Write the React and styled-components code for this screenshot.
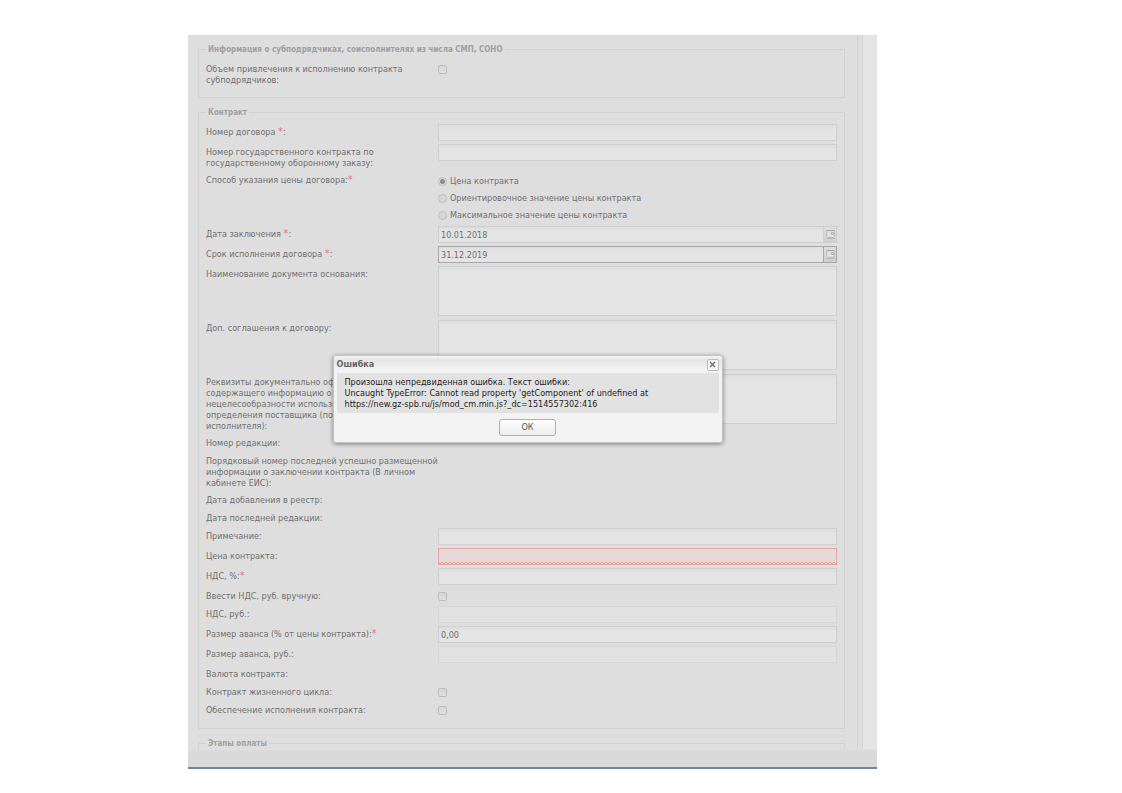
import React, {useState} from 'react'
import styled, {createGlobalStyle} from 'styled-components'

const groups = [
    {
        title: 'Информация о субподрядчиках, соисполнителях из числа СМП, СОНО',
        fields: [
            {id: 'subcontract', label: 'Объем привлечения к исполнению контракта\nсубподрядчиков', type: 'check'},
        ],
    },
    {
        title: 'Контракт',
        fields: [
            {id: 'number', label: 'Номер договора ', star: 'before'},
            {id: 'stateNumber', label: 'Номер государственного контракта по\nгосударственному оборонному заказу'},
            {id: 'priceType', label: 'Способ указания цены договора', star: 'after', type: 'radio'},
            {id: 'signed', label: 'Дата заключения ', star: 'before', type: 'date', value: '10.01.2018'},
            {id: 'due', label: 'Срок исполнения договора ', star: 'before', type: 'date', value: '31.12.2019', active: true},
            {id: 'basis', label: 'Наименование документа основания', type: 'area'},
            {id: 'extra', label: 'Доп. соглашения к договору', type: 'area'},
            {
                id: 'report',
                label: 'Реквизиты документально оформленного отчета,\nсодержащего информацию о невозможности\nнецелесообразности использования способов\nопределения поставщика (подрядчика,\nисполнителя)',
                type: 'area',
            },
            {id: 'revision', label: 'Номер редакции', type: 'display'},
            {id: 'order', label: 'Порядковый номер последней успешно размещенной\nинформации о заключении контракта (В личном\nкабинете ЕИС)', type: 'display'},
            {id: 'added', label: 'Дата добавления в реестр', type: 'display'},
            {id: 'changed', label: 'Дата последней редакции', type: 'display'},
            {id: 'note', label: 'Примечание'},
            {id: 'price', label: 'Цена контракта', invalid: true},
            {id: 'vat', label: 'НДС, %', star: 'after'},
            {id: 'vatManual', label: 'Ввести НДС, руб. вручную', type: 'check'},
            {id: 'vatSum', label: 'НДС, руб.', disabled: true},
            {id: 'advance', label: 'Размер аванса (% от цены контракта)', star: 'after', value: '0,00'},
            {id: 'advanceSum', label: 'Размер аванса, руб.', disabled: true},
            {id: 'currency', label: 'Валюта контракта', type: 'display'},
            {id: 'lifeCycle', label: 'Контракт жизненного цикла', type: 'check'},
            {id: 'security', label: 'Обеспечение исполнения контракта', type: 'check'},
        ],
    },
    {title: 'Этапы оплаты', fields: []},
]

const priceTypes = [
    'Цена контракта',
    'Ориентировочное значение цены контракта',
    'Максимальное значение цены контракта',
]

const CalendarIcon = () => (
    <svg width="11" height="11" viewBox="0 0 11 11" aria-hidden="true">
        <rect x="1.5" y="1.5" width="8" height="7" rx="1" fill="#dcdcdc" stroke="#c0c0c0"/>
        <path d="M1.5 1.5h8" stroke="#a8a8a8"/>
        <path d="M3 4.5h2M3 6.5h5" stroke="#ebebeb"/>
        <path d="M2 9.5h8" stroke="#b8b8b8"/>
        <circle cx="7.5" cy="4.5" r="1" fill="#e8e8e8" stroke="#959595"/>
    </svg>
)

const Control = ({field}) => {
    const [picked, setPicked] = useState(0)
    const {id, type, value, active, invalid, disabled} = field

    if (type === 'check') return <CheckBox id={id}/>
    if (type === 'display') return <output id={id}/>
    if (type === 'area') return <TextArea id={id}/>
    if (type === 'radio') return (
        <RadioGroup id={id} role="radiogroup" aria-label={field.label}>
            {priceTypes.map((name, i) => (
                <RadioLabel key={name}>
                    <Radio name={id} checked={picked === i} onChange={() => setPicked(i)}/>
                    {name}
                </RadioLabel>
            ))}
        </RadioGroup>
    )
    if (type === 'date') return (
        <DateField>
            <TextInput id={id} defaultValue={value} $active={active}/>
            <Trigger type="button" aria-label="Календарь" $active={active}><CalendarIcon/></Trigger>
        </DateField>
    )
    return <TextInput id={id} defaultValue={value} disabled={disabled} $invalid={invalid}/>
}

const App = () => {
    const [open, setOpen] = useState(true)

    return (
        <Page>
            <GlobalStyle/>
            <Frame>
                <Body>
                    <Form onSubmit={e => e.preventDefault()}>
                        {groups.map(group => (
                            <Group key={group.title}>
                                <Legend>{group.title}</Legend>
                                {group.fields.map(field => (
                                    <Row key={field.id}>
                                        <Label htmlFor={field.id}>
                                            {field.star === 'before' ? field.label : `${field.label}:`}
                                            {field.star && <Star>*</Star>}
                                            {field.star === 'before' && ':'}
                                        </Label>
                                        <Control field={field}/>
                                    </Row>
                                ))}
                            </Group>
                        ))}
                    </Form>
                    <Splitter/>
                    <Side/>
                </Body>
                <Footer/>
                {open && (
                    <Overlay>
                        <Dialog role="dialog" aria-labelledby="error-title">
                            <DialogHead>
                                <DialogTitle id="error-title">Ошибка</DialogTitle>
                                <CloseBtn type="button" aria-label="Закрыть" onClick={() => setOpen(false)}>
                                    <svg width="7" height="7" viewBox="0 0 7 7">
                                        <path d="M1 1l5 5M6 1l-5 5" stroke="#777" strokeWidth="1.5"/>
                                    </svg>
                                </CloseBtn>
                            </DialogHead>
                            <Message>
                                Произошла непредвиденная ошибка. Текст ошибки:<br/>
                                Uncaught TypeError: Cannot read property 'getComponent' of undefined at<br/>
                                https://new.gz-spb.ru/js/mod_cm.min.js?_dc=1514557302:416
                            </Message>
                            <OkBtn type="button" onClick={() => setOpen(false)}>ОК</OkBtn>
                        </Dialog>
                    </Overlay>
                )}
            </Frame>
        </Page>
    )
}

const GlobalStyle = createGlobalStyle`
* {
  box-sizing: border-box;
}
body {
  margin: 0;
  background: #fff;
}
body, input, textarea, button {
  font-family: "DejaVu Sans Condensed", "DejaVu Sans", sans-serif;
  font-size: 9px;
  line-height: 11px;
}
`

const Page = styled.div`
height: 100vh;
padding: 35px 245px 24px 188px;
`

const Frame = styled.div`
position: relative;
display: flex;
flex-direction: column;
height: 100%;
background: #dedede;
border-bottom: 2px solid #7483a3;
`

const Body = styled.div`
display: flex;
flex: 1;
min-height: 0;
`

const Form = styled.form`
flex: 1;
min-width: 0;
overflow: hidden;
padding: 8px 12px 0 10px;
`

const Splitter = styled.div`
width: 6px;
border: 1px solid #d2d2d2;
border-width: 0 1px;
background: #dedede;
`

const Side = styled.div`
width: 14px;
background: #e4e4e4;
`

const Footer = styled.div`
height: 18px;
border-top: 1px solid #e0e0e0;
background: #dadada;
`

const Group = styled.fieldset`
margin: 0 0 8px;
padding: 6px 7px 8px;
min-width: 0;
border: 1px solid #d2d2d2;
`

const Legend = styled.legend`
padding: 1px 2px 0;
color: #a0a0a0;
font-size: 8px;
font-weight: bold;
line-height: 11px;
`

const Row = styled.div`
display: grid;
grid-template-columns: 232px 1fr;
align-items: start;
min-height: 15px;
margin-bottom: 3px;
`

const Label = styled.label`
padding-top: 3px;
color: #707070;
white-space: pre;
`

const Star = styled.span`
color: #ec7474;
font-size: 11px;
line-height: 0;
`

const TextInput = styled.input`
display: block;
width: 100%;
min-width: 0;
height: 17px;
padding: 1px 2px 0;
border: 1px solid ${p => p.$invalid ? '#eba4a2' : p.$active ? '#a8a8a8' : '#cfcfcf'};
border-radius: 0;
outline: none;
color: #707070;
background: linear-gradient(#dcdfdf, #e4e4e4 5px);
${p => p.$invalid && `
background:
  repeating-linear-gradient(90deg, #e69a98 0 2px, #ead6d6 2px 4px) 0 100% / 100% 1px no-repeat,
  repeating-linear-gradient(90deg, #ead6d6 0 2px, #e69a98 2px 4px) 0 calc(100% - 1px) / 100% 1px no-repeat,
  #e5dadb;
`}

&:disabled {
  border-color: #d6d6d6;
  background: #e1e1e1;
}
`

const TextArea = styled.textarea`
display: block;
width: 100%;
height: 50px;
margin: 0 0 1px;
padding: 2px;
border: 1px solid #cfcfcf;
outline: none;
resize: none;
color: #707070;
background: linear-gradient(#dcdfdf, #e4e4e4 5px);
`

const DateField = styled.div`
display: flex;
`

const Trigger = styled.button`
flex: none;
display: flex;
align-items: center;
justify-content: center;
width: 13px;
height: 17px;
padding: 0;
border: 1px solid ${p => p.$active ? '#a8a8a8' : '#cfcfcf'};
border-left: none;
background: linear-gradient(#dedede, #cecece);
`

const CheckBox = styled.input.attrs({type: 'checkbox'})`
appearance: none;
width: 9px;
height: 9px;
margin: 4px 0 0;
border: 1px solid #bebebe;
border-radius: 2px;
background: linear-gradient(#d6d6d6, #e0e0e0);

&:checked {
  background: #a0a0a0;
}
`

const RadioGroup = styled.div`
display: grid;
`

const RadioLabel = styled.label`
display: flex;
align-items: center;
gap: 3px;
height: 17px;
padding-top: 1px;
color: #707070;
`

const Radio = styled.input.attrs({type: 'radio'})`
appearance: none;
width: 9px;
height: 9px;
margin: 0;
border: 1px solid #bebebe;
border-radius: 50%;
background: #d8d8d8;

&:checked {
  background: radial-gradient(circle, #8c8c8c 2px, #dadada 3px);
}
`

const Overlay = styled.div`
position: absolute;
inset: 0;
display: flex;
align-items: center;
justify-content: center;
padding: 0 10px 4px 0;
`

const Dialog = styled.div`
display: flex;
flex-direction: column;
width: 390px;
padding: 0 3px 6px;
border: 1px solid #c4c4c4;
border-radius: 3px;
background: linear-gradient(#f6f6f6, #e6e6e6 4px, #f3f3f3 14px);
box-shadow: 0 1px 4px rgba(0, 0, 0, 0.45);
`

const DialogHead = styled.div`
display: flex;
align-items: center;
justify-content: space-between;
height: 17px;
`

const DialogTitle = styled.h1`
margin: 0;
color: #666;
font-size: 9px;
line-height: 11px;
`

const CloseBtn = styled.button`
display: flex;
align-items: center;
justify-content: center;
width: 12px;
height: 12px;
padding: 0;
border: 1px solid #bcbcbc;
border-radius: 2px;
background: #f5f5f5;
`

const Message = styled.p`
margin: 0 0 6px;
padding: 4px 8px 3px;
color: #222;
background: #e2e2e2;
`

const OkBtn = styled.button`
align-self: center;
width: 57px;
height: 17px;
padding: 0;
border: 1px solid #b0b0b0;
border-radius: 3px;
color: #555;
background: linear-gradient(#fff, #ececec);
`

export default App;
